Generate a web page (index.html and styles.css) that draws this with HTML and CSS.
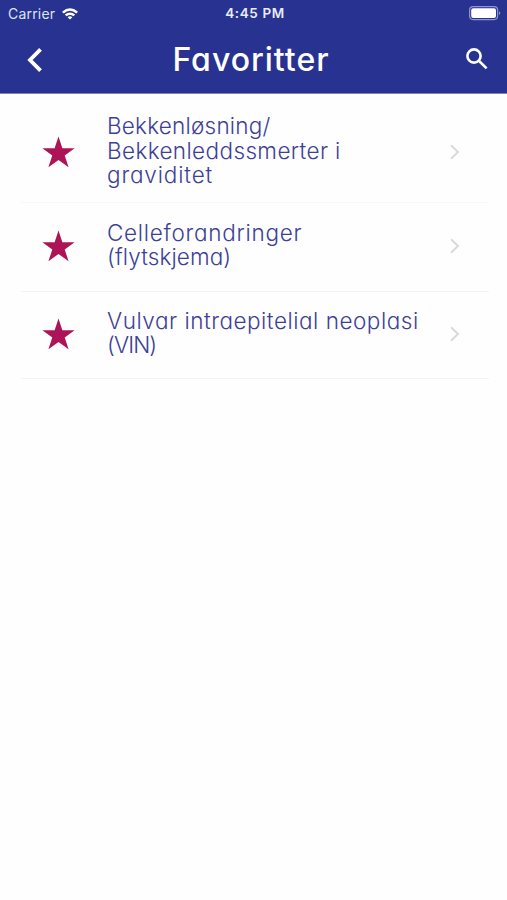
FILE: index.html
```html
<!DOCTYPE html>
<html lang="no">
<head>
<meta charset="utf-8">
<title>Favoritter</title>
<link rel="stylesheet" href="styles.css">
</head>
<body>
<header class="header">
  <div class="status">
    <div class="carrier"><span>Carrier</span>
      <svg class="wifi" viewBox="0 0 18 13"><path d="M1 4.7Q9-2.1 17 4.7L15.3 6.4Q9 1.2 2.7 6.4ZM3.8 7.5Q9 3.3 14.2 7.5L12.4 9.2Q9 6.7 5.6 9.2ZM6.6 10.2Q9 8.5 11.4 10.2L9 12.6Z"/></svg>
    </div>
    <time class="clock">4:45 PM</time>
    <svg class="battery" viewBox="0 0 32 15"><rect class="shell" x=".6" y=".6" width="28" height="13" rx="3.5"/><rect class="charge" x="2.2" y="2.2" width="24.8" height="9.8" rx="2"/><path class="tip" d="M30 5.2Q32.6 7.1 30 9Z"/></svg>
  </div>
  <div class="nav">
    <svg class="back" viewBox="0 0 16 24"><path d="M13.5 1.4 3 12 13.5 22.6"/></svg>
    <h1 class="title">Favoritter</h1>
    <svg class="search" viewBox="0 0 22 22"><circle cx="8" cy="8" r="6.6"/><path d="m12.8 12.8 7.8 7.6"/></svg>
  </div>
</header>
<main class="list">
  <article class="row tall">
    <svg class="star" viewBox="0 0 34 32"><path d="m17 0 4 12.2h12.6l-10.2 7.5 4 12L17 24.3 6.6 31.7l4-12L.4 12.2H13Z"/></svg>
    <p class="label"><span class="l1">Bekkenløsning/</span><span class="l2">Bekkenleddssmerter i</span><span class="l3">graviditet</span></p>
    <svg class="chevron" viewBox="0 0 10 16"><path d="m1 1.3 7 6.7-7 6.7"/></svg>
  </article>
  <article class="row">
    <svg class="star" viewBox="0 0 34 32"><path d="m17 0 4 12.2h12.6l-10.2 7.5 4 12L17 24.3 6.6 31.7l4-12L.4 12.2H13Z"/></svg>
    <p class="label"><span class="l4">Celleforandringer</span><span class="l5">(flytskjema)</span></p>
    <svg class="chevron" viewBox="0 0 10 16"><path d="m1 1.3 7 6.7-7 6.7"/></svg>
  </article>
  <article class="row last">
    <svg class="star" viewBox="0 0 34 32"><path d="m17 0 4 12.2h12.6l-10.2 7.5 4 12L17 24.3 6.6 31.7l4-12L.4 12.2H13Z"/></svg>
    <p class="label"><span class="l6">Vulvar intraepitelial neoplasi</span><span class="l7">(VIN)</span></p>
    <svg class="chevron" viewBox="0 0 10 16"><path d="m1 1.3 7 6.7-7 6.7"/></svg>
  </article>
</main>
</body>
</html>
```
FILE: styles.css
```css
* { box-sizing: border-box; }
body { margin: 0; background: #fefefe; font-family: Inter, sans-serif; }
svg { display: block; flex: none; }
.header { height: 94px; background: #283391; color: #fff; border-bottom: 1px solid #7b82bb; }
.status { height: 27px; display: grid; grid-template-columns: 1fr auto 1fr; align-items: center; padding: 0 6px 0 8px; }
.carrier { display: flex; align-items: center; gap: 6px; font-size: 14px; letter-spacing: .2px; color: #dfe2f5; }
.wifi { width: 18px; height: 13px; fill: #fff; }
.clock { font-size: 13.5px; font-weight: 600; letter-spacing: .6px; color: #e9ebf8; margin: 0 0 1px 1px; }
.battery { width: 32px; height: 15px; justify-self: end; }
.shell { fill: none; stroke: #8f95c9; stroke-width: 1.2; }
.charge { fill: #fff; }
.tip { fill: #8f95c9; }
.nav { height: 66px; display: grid; grid-template-columns: 86px 1fr 100px; align-items: center; padding: 0 18px 0 27px; }
.back { width: 16px; height: 24px; fill: none; stroke: #fff; stroke-width: 3.8; }
.title { margin: 0; text-align: center; font-size: 32px; line-height: 40px; font-weight: 500; letter-spacing: 1px; font-feature-settings: "cv11"; }
.search { width: 22px; height: 22px; justify-self: end; margin: 0 1px 2px 0; fill: none; stroke: #fff; stroke-width: 2.6; }
.list { padding: 0 18px 0 21px; }
.row { height: 89px; display: grid; grid-template-columns: 86px 1fr 38px; align-items: center; padding-bottom: 2px; border-bottom: 1px solid #f3f3f3; }
.tall { height: 109px; padding: 8px 0 0; border-color: #f7f7f7; }
.last { height: 87px; }
.star { width: 33px; height: 32px; margin-left: 21px; fill: #ac1457; }
.label { margin: 0 0 2px; color: #3d4096; font-size: 22.5px; font-weight: 300; line-height: 24.4px; white-space: nowrap; font-feature-settings: "cv11"; }
.label span { display: block; width: max-content; }
.l1 { letter-spacing: .22px; }
.l2 { letter-spacing: .38px; }
.l3 { letter-spacing: .85px; }
.l4 { letter-spacing: .72px; }
.l5 { letter-spacing: .1px; }
.l6 { letter-spacing: .52px; }
.l7 { letter-spacing: -.9px; }
.chevron { width: 10px; height: 16px; fill: none; stroke: #dadada; stroke-width: 2; margin-left: -1px; }
```
